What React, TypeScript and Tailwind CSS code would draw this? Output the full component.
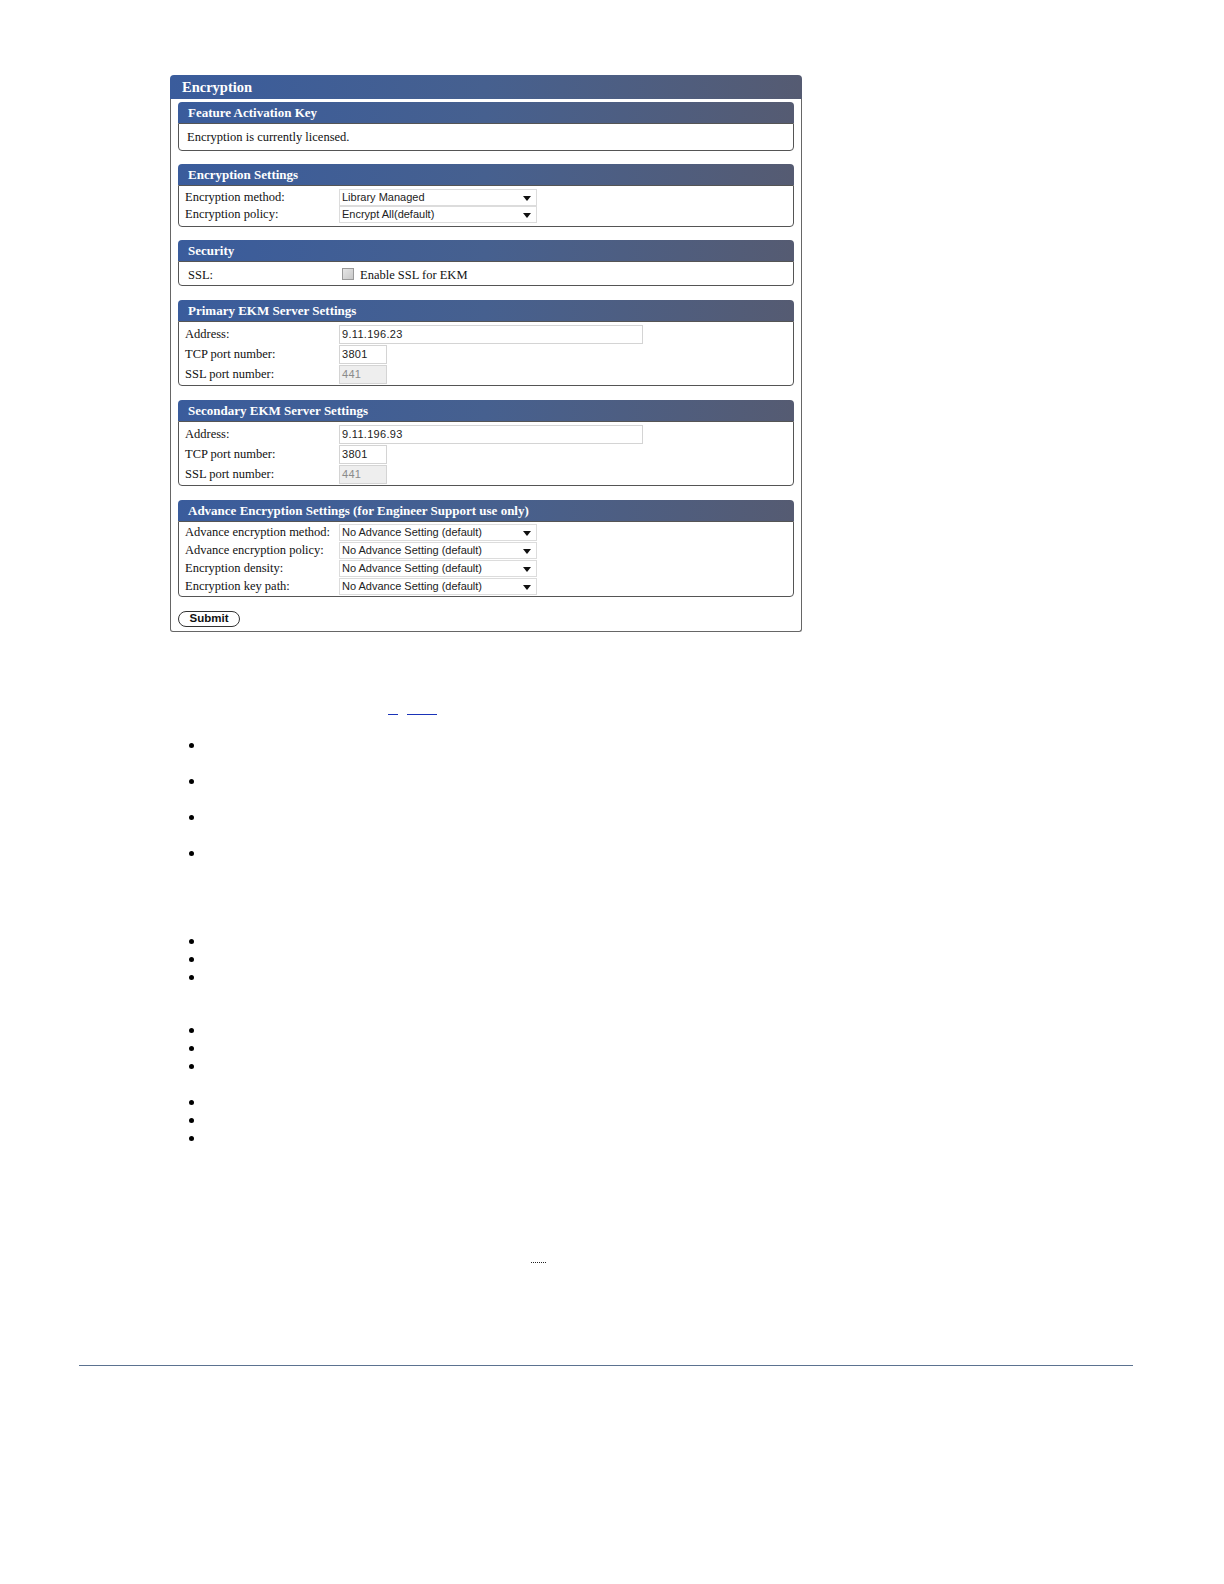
import React from 'react';

const serif = { fontFamily: '"Liberation Serif", "Times New Roman", serif' };
const sans = { fontFamily: '"Liberation Sans", Arial, sans-serif' };

function SectionHeader({ title }: { title: string }) {
    return (
        <div
            className="h-[21px] rounded-t-[4px] bg-gradient-to-r from-[#3a5c9c] via-[#46608f] to-[#555b72] pl-[10px] flex items-center text-white font-bold text-[13px] leading-none"
            style={serif}
        >
            {title}
        </div>
    );
}

function Arrow() {
    return (
        <svg width="8" height="5" viewBox="0 0 8 5" className="mr-[5px] mt-[2px]">
            <path d="M0 0 H8 L4 5 Z" fill="#111" />
        </svg>
    );
}

function Select({ value }: { value: string }) {
    return (
        <div
            className="w-[198px] h-[17px] border border-[#dcdcdc] bg-white flex items-center justify-between pl-[2px] text-[11px] text-[#222] leading-none"
            style={sans}
        >
            <span>{value}</span>
            <Arrow />
        </div>
    );
}

function Input({ value, width, disabled }: { value: string; width: string; disabled?: boolean }) {
    return (
        <div
            className={`${width} h-[19px] border border-[#d4d4d4] flex items-center pl-[2px] text-[11px] tracking-[0.3px] leading-none ${disabled ? 'bg-[#eeeeee] text-[#8a8a8a]' : 'bg-white text-[#222]'}`}
            style={sans}
        >
            {value}
        </div>
    );
}

function Row({ label, h, children }: { label: string; h: string; children: React.ReactNode }) {
    return (
        <div className={`flex items-center ${h}`}>
            <div className="w-[154px] text-[12.5px] text-[#111] leading-none" style={serif}>
                {label}
            </div>
            {children}
        </div>
    );
}

function Body({ className, children }: { className: string; children: React.ReactNode }) {
    return <div className={`border border-[#555] rounded-b-[4px] ${className}`}>{children}</div>;
}

function ServerSettings({ title, address }: { title: string; address: string }) {
    return (
        <div className="mt-[14px]">
            <SectionHeader title={title} />
            <Body className="pl-[6px] pt-[2px] pb-[1px]">
                <Row label="Address:" h="h-[20px]">
                    <Input value={address} width="w-[304px]" />
                </Row>
                <Row label="TCP port number:" h="h-[20px]">
                    <Input value="3801" width="w-[48px]" />
                </Row>
                <Row label="SSL port number:" h="h-[20px]">
                    <Input value="441" width="w-[48px]" disabled />
                </Row>
            </Body>
        </div>
    );
}

function Bullet({ h }: { h: string }) {
    return (
        <div className={`${h} flex items-center pl-[189px]`}>
            <div className="w-[5px] h-[5px] rounded-full bg-black" />
        </div>
    );
}

export default function App() {
    return (
        <div className="w-full h-[1584px] bg-white overflow-hidden pt-[75px]">
            {/* Encryption panel */}
            <div className="ml-[170px] w-[632px]">
                <div
                    className="h-[24px] rounded-t-[4px] bg-gradient-to-r from-[#3a5c9c] via-[#46608f] to-[#555b72] pl-[12px] flex items-center text-white font-bold text-[14.5px] leading-none"
                    style={serif}
                >
                    Encryption
                </div>
                <div className="border-x border-b border-[#666] rounded-b-[3px] px-[7px] pt-[3px] pb-[4px]">
                    {/* Feature Activation Key */}
                    <SectionHeader title="Feature Activation Key" />
                    <Body className="h-[28px] pl-[8px] flex items-center">
                        <span className="text-[12.5px] text-[#111] leading-none" style={serif}>
                            Encryption is currently licensed.
                        </span>
                    </Body>

                    {/* Encryption Settings */}
                    <div className="mt-[13px]">
                        <SectionHeader title="Encryption Settings" />
                        <Body className="pl-[6px] pt-[3px] pb-[3px]">
                            <Row label="Encryption method:" h="h-[17px]">
                                <Select value="Library Managed" />
                            </Row>
                            <Row label="Encryption policy:" h="h-[17px]">
                                <Select value="Encrypt All(default)" />
                            </Row>
                        </Body>
                    </div>

                    {/* Security */}
                    <div className="mt-[13px]">
                        <SectionHeader title="Security" />
                        <Body className="pl-[9px] pt-[2px] pb-[2px]">
                            <div className="flex items-center h-[19px]">
                                <div className="w-[151px] text-[12.5px] text-[#111] leading-none mt-[3px]" style={serif}>
                                    SSL:
                                </div>
                                <div className="ml-[3px] w-[12px] h-[12px] border border-[#9a9a9a] bg-gradient-to-br from-[#e6e6e6] to-[#c8c8c8]" />
                                <span className="ml-[6px] text-[12.5px] text-[#111] leading-none mt-[3px]" style={serif}>
                                    Enable SSL for EKM
                                </span>
                            </div>
                        </Body>
                    </div>

                    <ServerSettings title="Primary EKM Server Settings" address="9.11.196.23" />
                    <ServerSettings title="Secondary EKM Server Settings" address="9.11.196.93" />

                    {/* Advance */}
                    <div className="mt-[14px]">
                        <SectionHeader title="Advance Encryption Settings (for Engineer Support use only)" />
                        <Body className="pl-[6px] pt-[1px] pb-[1px]">
                            <Row label="Advance encryption method:" h="h-[18px]">
                                <Select value="No Advance Setting (default)" />
                            </Row>
                            <Row label="Advance encryption policy:" h="h-[18px]">
                                <Select value="No Advance Setting (default)" />
                            </Row>
                            <Row label="Encryption density:" h="h-[18px]">
                                <Select value="No Advance Setting (default)" />
                            </Row>
                            <Row label="Encryption key path:" h="h-[18px]">
                                <Select value="No Advance Setting (default)" />
                            </Row>
                        </Body>
                    </div>

                    <button
                        className="mt-[14px] w-[62px] h-[16px] rounded-full border border-[#333] bg-white flex items-center justify-center text-[11.5px] font-bold text-[#111] leading-none"
                        style={sans}
                    >
                        Submit
                    </button>
                </div>
            </div>

            {/* Link underlines */}
            <div className="mt-[71px] ml-[388px] flex h-[12px]">
                <span className="w-[10px] border-b border-[#1a33b8]" />
                <span className="ml-[9px] w-[30px] border-b border-[#1a33b8]" />
            </div>

            {/* Bullet lists */}
            <div className="mt-[12px]">
                <Bullet h="h-[36px]" />
                <Bullet h="h-[36px]" />
                <Bullet h="h-[36px]" />
                <Bullet h="h-[36px]" />
            </div>
            <div className="mt-[61px]">
                <Bullet h="h-[18px]" />
                <Bullet h="h-[18px]" />
                <Bullet h="h-[18px]" />
            </div>
            <div className="mt-[35px]">
                <Bullet h="h-[18px]" />
                <Bullet h="h-[18px]" />
                <Bullet h="h-[18px]" />
            </div>
            <div className="mt-[18px]">
                <Bullet h="h-[18px]" />
                <Bullet h="h-[18px]" />
                <Bullet h="h-[18px]" />
            </div>

            {/* Dotted mark */}
            <div className="mt-[114px] ml-[531px] w-[15px] h-[2px] border-b border-dotted border-[#222]" />

            {/* Footer rule */}
            <div className="mt-[102px] ml-[79px] w-[1054px] h-[1px] bg-[#5b7290]" />
        </div>
    );
}
